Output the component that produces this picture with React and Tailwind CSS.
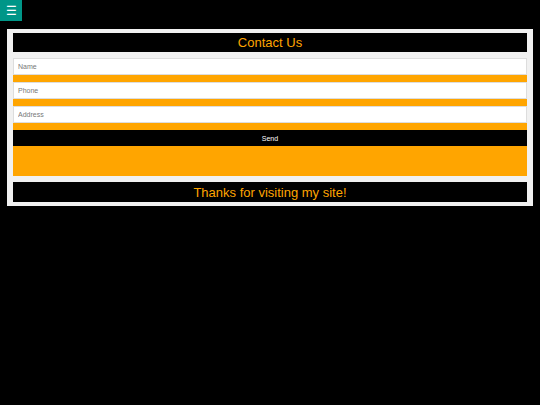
export default function App() {
  return (
    <div className="min-h-[405px] w-[540px] bg-black" style={{ fontFamily: '"Liberation Sans", Arial, sans-serif' }}>
      <div className="h-[29px]">
        <button className="flex h-[21px] w-[22px] items-center justify-center bg-[#009688] text-[12px] leading-none text-white">
          ☰
        </button>
      </div>
      <div className="mx-[7px] flex flex-col gap-[6px] bg-[#f1f1f1] px-[6px] pt-[4px] pb-[4px]">
        <div className="flex h-[19px] items-center justify-center bg-black text-[13px] leading-none text-[#ffa500]">
          Contact Us
        </div>
        <form className="flex flex-col bg-[#ffa500] pb-[30px]">
          <input
            className="mb-[7px] h-[17px] w-full border border-[#dddddd] bg-white px-[4px] text-[7px] text-[#555] placeholder:text-[#777] outline-none"
            placeholder="Name"
          />
          <input
            className="mb-[7px] h-[17px] w-full border border-[#dddddd] bg-white px-[4px] text-[7px] text-[#555] placeholder:text-[#777] outline-none"
            placeholder="Phone"
          />
          <input
            className="mb-[7px] h-[17px] w-full border border-[#dddddd] bg-white px-[4px] text-[7px] text-[#555] placeholder:text-[#777] outline-none"
            placeholder="Address"
          />
          <button
            type="button"
            className="flex h-[16px] w-full items-center justify-center bg-black text-[7px] leading-none text-white"
          >
            Send
          </button>
        </form>
        <div className="flex h-[20px] items-center justify-center bg-black text-[13px] leading-none text-[#ffa500]">
          Thanks for visiting my site!
        </div>
      </div>
    </div>
  );
}
